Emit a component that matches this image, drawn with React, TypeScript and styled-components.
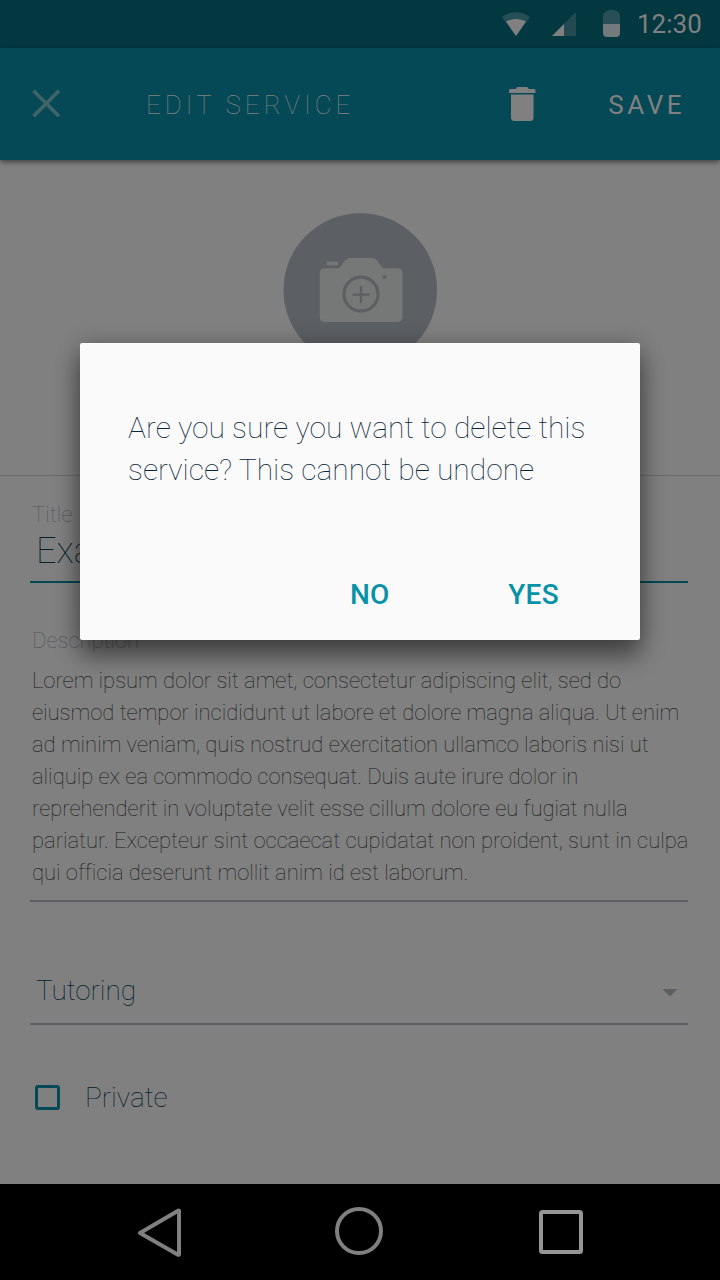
import React from 'react';
import styled, { createGlobalStyle } from 'styled-components';

const Global = createGlobalStyle`
  * { box-sizing: border-box; }
  body { margin: 0; background: #808080; font-family: Roboto, sans-serif; }
`;

const Screen = styled.div`
  position: relative;
  width: 720px;
  height: 1280px;
  overflow: hidden;
  background: #808080;
  display: flex;
  flex-direction: column;
`;

const StatusBar = styled.div`
  height: 48px;
  background: #033841;
  display: flex;
  align-items: center;
  justify-content: flex-end;
  padding-right: 18px;
`;

const Icon = styled.svg`
  display: block;
  flex: none;
`;

const Clock = styled.span`
  margin-left: 17px;
  font-size: 26px;
  line-height: 48px;
  width: 65px;
  white-space: nowrap;
  color: #808080;
`;

const AppBar = styled.header`
  position: relative;
  height: 112px;
  background: #044955;
  box-shadow: 0 2px 5px rgba(0, 0, 0, 0.5);
  display: flex;
  align-items: center;
  padding: 2px 33px 0 30px;
`;

const BarTitle = styled.h1`
  margin: 0 0 0 84px;
  flex: 1;
  font-weight: 100;
  font-size: 26px;
  letter-spacing: 4px;
  color: #808080;
`;

const SaveLabel = styled.span`
  margin: 0 2px 0 72px;
  font-size: 26px;
  letter-spacing: 3.5px;
  color: #808080;
`;

const PhotoArea = styled.section`
  height: 316px;
  padding-top: 52px;
  display: flex;
  justify-content: center;
  align-items: flex-start;
  border-bottom: 1px solid #6c6c6c;
`;

const Form = styled.main`
  height: 708px;
  padding: 26px 32px 0 30px;
`;

const Label = styled.div`
  padding-left: 2px;
  font-size: 22px;
  line-height: 26px;
  font-weight: 100;
  color: #505357;
`;

const TitleField = styled.div`
  height: 55px;
  margin-bottom: 45px;
  padding-left: 6px;
  border-bottom: 2px solid #044955;
  font-size: 36px;
  line-height: 46px;
  font-weight: 100;
  color: #05222f;
`;

const Description = styled.div`
  margin-top: 11px;
  padding: 0 0 11px 2px;
  border-bottom: 2px solid #5c5f64;
  font-size: 22px;
  line-height: 32px;
  font-weight: 100;
  letter-spacing: -0.014px;
  white-space: nowrap;
  color: #181818;
`;

const SelectField = styled.div`
  height: 123px;
  padding: 56px 10px 0 6px;
  display: flex;
  align-items: flex-start;
  justify-content: space-between;
  border-bottom: 2px solid #5c5f64;
`;

const FieldText = styled.span`
  font-size: 28px;
  line-height: 66px;
  font-weight: 100;
  letter-spacing: -0.05px;
  color: #05222f;
`;

const CheckRow = styled.div`
  display: flex;
  align-items: center;
  gap: 25px;
  padding: 40px 0 0 5px;
`;

const CheckBox = styled.span`
  width: 25px;
  height: 25px;
  margin-bottom: 2px;
  border: 3px solid #044955;
  border-radius: 3px;
`;

const NavBar = styled.nav`
  height: 96px;
  background: #000;
  display: flex;
  align-items: center;
  justify-content: space-between;
  padding: 0 136px;
`;

const Dialog = styled.div`
  position: absolute;
  left: 80px;
  top: 343px;
  width: 560px;
  height: 297px;
  padding: 64px 48px 0;
  background: #fafafa;
  border-radius: 2px;
  box-shadow: 0 16px 24px rgba(0, 0, 0, 0.45), 0 0 24px rgba(0, 0, 0, 0.2);
`;

const Message = styled.p`
  margin: 0;
  font-size: 30px;
  line-height: 42px;
  font-weight: 100;
  letter-spacing: -0.015px;
  white-space: nowrap;
  color: #0a273a;
`;

const Actions = styled.div`
  display: flex;
  justify-content: flex-end;
  gap: 118.5px;
  padding: 88px 33px 0 0;
`;

const Action = styled.span`
  font-size: 28px;
  line-height: 32px;
  font-weight: 500;
  letter-spacing: 0.3px;
  color: #0892a9;
`;

export default function App() {
  return (
    <>
      <Global />
      <Screen>
        <StatusBar>
          <Icon width="120" height="48" viewBox="500 0 120 48">
            <path d="M502 17C510 10.5 522 10.5 530 17L516 36Z" fill="#254f56" />
            <path d="M506 21.5C512 18 520 18 526 21.5L516 36Z" fill="#808080" />
            <path d="M552 36L576 12V36Z" fill="#234a51" />
            <path d="M552 36L564 24V36Z" fill="#808080" />
            <path d="M603 24V17C603 12 606 10 611.5 10S620 12 620 17V24Z" fill="#294f56" />
            <path d="M603 24H620V33Q620 37 616 37H607Q603 37 603 33Z" fill="#73797c" />
          </Icon>
          <Clock>12:30</Clock>
        </StatusBar>
        <AppBar>
          <Icon width="32" height="32" viewBox="0 0 32 32">
            <path d="M3.5 1.7L29 27.3M29 1.7L3.5 27.3" stroke="#426469" strokeWidth="3.7" />
          </Icon>
          <BarTitle>EDIT SERVICE</BarTitle>
          <Icon width="28" height="36" viewBox="508 87 28 36">
            <path d="M509 93V90.5Q509 89 510.5 89H516Q516 87 518 87H526.5Q528.5 87 528.5 89H534Q535.5 89 535.5 90.5V93Z" fill="#808080" />
            <path d="M511 94.5H533.5V117.5Q533.5 121 530 121H514.5Q511 121 511 117.5Z" fill="#808080" />
          </Icon>
          <SaveLabel>SAVE</SaveLabel>
        </AppBar>
        <PhotoArea>
          <Icon width="156" height="156" viewBox="282 212 156 156">
            <circle cx="360.3" cy="290" r="76.8" fill="#5c5f64" />
            <rect x="327" y="261.5" width="11" height="4" rx="1" fill="#757877" />
            <path d="M324 268.3H339L345.5 260Q347 258 350 258H372Q375 258 377 260.5L382.5 268.3H397.5Q402.5 268.3 402.5 273V317Q402.5 322 397.5 322H324.5Q319.7 322 319.7 317V273Q319.7 268.3 324 268.3Z" fill="#757877" />
            <circle cx="361" cy="294.2" r="17" fill="none" stroke="#5c5f64" strokeWidth="3.2" />
            <path d="M352.5 294.6H369.5M361 286V303" stroke="#5c5f64" strokeWidth="2.3" />
            <rect x="382.8" y="275.2" width="3.6" height="3.6" rx="0.5" fill="#5c5f64" />
          </Icon>
        </PhotoArea>
        <Form>
          <Label>Title</Label>
          <TitleField>Example</TitleField>
          <Label>Description</Label>
          <Description>
            Lorem ipsum dolor sit amet, consectetur adipiscing elit, sed do<br />
            eiusmod tempor incididunt ut labore et dolore magna aliqua. Ut enim<br />
            ad minim veniam, quis nostrud exercitation ullamco laboris nisi ut<br />
            aliquip ex ea commodo consequat. Duis aute irure dolor in<br />
            reprehenderit in voluptate velit esse cillum dolore eu fugiat nulla<br />
            pariatur. Excepteur sint occaecat cupidatat non proident, sunt in culpa<br />
            qui officia deserunt mollit anim id est laborum.
          </Description>
          <SelectField>
            <FieldText>Tutoring</FieldText>
            <Icon width="16" height="66" viewBox="0 0 16 66">
              <path d="M0.5 31H15.5L8 38.5Z" fill="#5c5f64" />
            </Icon>
          </SelectField>
          <CheckRow>
            <CheckBox />
            <FieldText>Private</FieldText>
          </CheckRow>
        </Form>
        <NavBar>
          <Icon width="48" height="52" viewBox="136 1206 48 52">
            <path d="M140 1233L178.5 1210.5Q179 1210.5 179 1211V1254.5Q179 1255 178 1254.8Z" fill="none" stroke="#808080" strokeWidth="4" strokeLinejoin="round" />
          </Icon>
          <Icon width="52" height="52" viewBox="334 1206 52 52">
            <circle cx="359" cy="1231" r="22" fill="none" stroke="#808080" strokeWidth="4" />
          </Icon>
          <Icon width="48" height="52" viewBox="536 1206 48 52">
            <rect x="541" y="1212" width="40" height="40" rx="1.5" fill="none" stroke="#959595" strokeWidth="4" />
          </Icon>
        </NavBar>
        <Dialog role="dialog">
          <Message>
            Are you sure you want to delete this<br />
            service? This cannot be undone
          </Message>
          <Actions>
            <Action>NO</Action>
            <Action>YES</Action>
          </Actions>
        </Dialog>
      </Screen>
    </>
  );
}
